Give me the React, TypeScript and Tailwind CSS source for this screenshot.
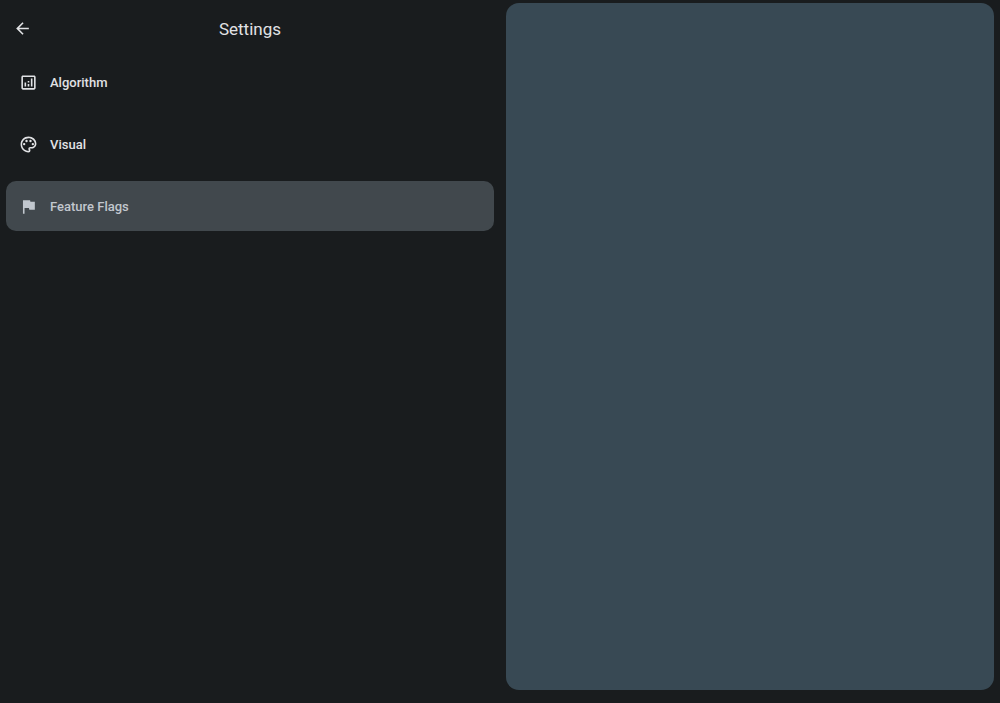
const icons = {
  analytics: "M19 3H5c-1.100 0-2 .9-2 2v14c0 1.100.9 2 2 2h14c1.100 0 2-.9 2-2V5c0-1.100-.9-2-2-2zm0 16H5V5h14v14zM7 12h2v5H7zM15 7h2v10h-2zM11 14h2v3h-2zM11 10h2v2h-2z",
  palette: "M12 22C6.490 22 2 17.510 2 12S6.490 2 12 2s10 4.040 10 9c0 3.310-2.690 6-6 6h-1.770c-.28 0-.5.22-.5.5 0 .12.050.23.130.33.410.47.640 1.060.640 1.670A2.500 2.500 0 0 1 12 22zm0-18c-4.410 0-8 3.590-8 8s3.590 8 8 8c.28 0 .5-.22.5-.5a.54.54 0 0 0-.14-.35c-.41-.46-.63-1.050-.63-1.650a2.500 2.500 0 0 1 2.500-2.500H16c2.210 0 4-1.790 4-4 0-3.860-3.590-7-8-7z M8 11.500a1.500 1.500 0 1 1-3 0 1.500 1.500 0 0 1 3 0z M11 7.500a1.500 1.500 0 1 1-3 0 1.500 1.500 0 0 1 3 0z M16 7.500a1.500 1.500 0 1 1-3 0 1.500 1.500 0 0 1 3 0z M19 11.500a1.500 1.500 0 1 1-3 0 1.500 1.500 0 0 1 3 0z",
  flag: "M14.400 6L14 4H5v17h2v-7h5.600l.4 2h7V6z",
  back: "M20 11H7.830l5.590-5.590L12 4l-8 8 8 8 1.410-1.410L7.830 13H20v-2z",
};

const items: { label: string; icon: keyof typeof icons; selected?: boolean }[] = [
  { label: "Algorithm", icon: "analytics" },
  { label: "Visual", icon: "palette" },
  { label: "Feature Flags", icon: "flag", selected: true },
];

function Icon({ name }: { name: keyof typeof icons }) {
  return (
    <svg viewBox="0 0 24 24" className="size-[19px] shrink-0" fill="currentColor" aria-hidden="true">
      <path d={icons[name]} />
    </svg>
  );
}

export default function App() {
  return (
    <div className="grid min-h-screen grid-cols-2 bg-[#191c1e] font-['Roboto',sans-serif] text-[#e1e2e5] antialiased">
      <section className="flex flex-col">
        <header className="grid h-[57px] grid-cols-[44px_1fr_44px] items-center">
          <button type="button" aria-label="Back" className="flex h-10 items-center justify-center">
            <Icon name="back" />
          </button>
          <h1 className="pt-0.5 text-center text-[17px]">Settings</h1>
        </header>
        <nav className="flex flex-col gap-3 px-1.5">
          {items.map((item) => (
            <button
              key={item.label}
              type="button"
              aria-current={item.selected ? "page" : undefined}
              className={
                item.selected
                  ? "flex h-[50px] items-center gap-3 rounded-[10px] bg-[#41484d] px-[13px] text-[13px] font-medium text-[#c1c7ce]"
                  : "flex h-[50px] items-center gap-3 rounded-[10px] px-[13px] text-[13px] font-medium"
              }
            >
              <Icon name={item.icon} />
              <span className="pt-0.5">{item.label}</span>
            </button>
          ))}
        </nav>
      </section>
      <main className="flex px-1.5 pt-[3px] pb-[13px]">
        <div className="flex-1 rounded-[13px] bg-[#384954]" />
      </main>
    </div>
  );
}
